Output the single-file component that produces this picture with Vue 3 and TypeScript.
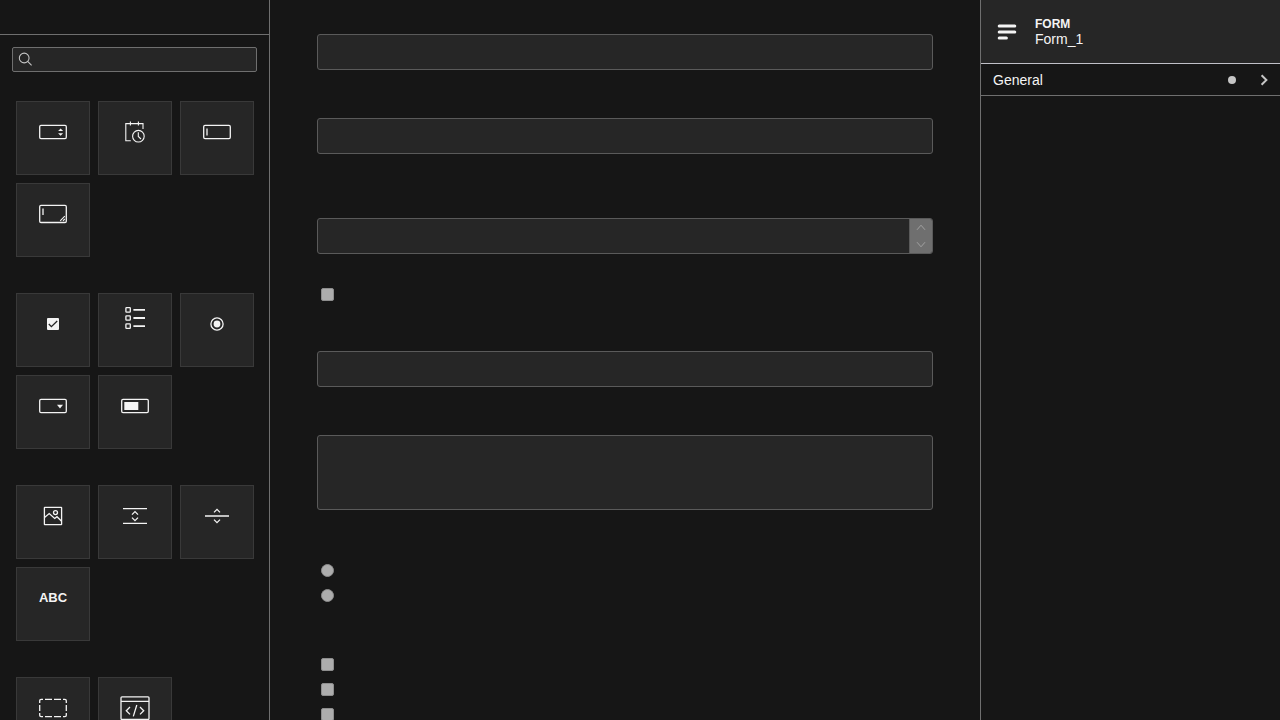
<script setup lang="ts">
import { ref } from 'vue'

interface Tile {
  name: string
  label: string
}

const groups: Tile[][] = [
  [
    { name: 'number', label: 'Number' },
    { name: 'datetime', label: 'Date time' },
    { name: 'textfield', label: 'Text field' },
    { name: 'textarea', label: 'Text area' },
  ],
  [
    { name: 'checkbox', label: 'Checkbox' },
    { name: 'checklist', label: 'Checkbox group' },
    { name: 'radio', label: 'Radio group' },
    { name: 'select', label: 'Select' },
    { name: 'taglist', label: 'Tag list' },
  ],
  [
    { name: 'image', label: 'Image view' },
    { name: 'spacer', label: 'Spacer' },
    { name: 'separator', label: 'Separator' },
    { name: 'text', label: 'Text view' },
  ],
  [
    { name: 'group', label: 'Group' },
    { name: 'iframe', label: 'iFrame' },
  ],
]

const search = ref('')
</script>

<template>
  <div class="editor">
    <aside class="palette">
      <header class="palette-header"></header>
      <div class="search">
        <svg class="search-icon" viewBox="0 0 16 16" aria-hidden="true">
          <circle cx="6.6" cy="6.4" r="5.2" />
          <path d="M10.3 10.1L14.5 14.3" />
        </svg>
        <input v-model="search" type="text" aria-label="Search components" />
      </div>
      <div class="groups">
        <div v-for="(group, i) in groups" :key="i" class="tiles">
          <button v-for="tile in group" :key="tile.name" type="button" class="tile" :aria-label="tile.label">
            <svg class="icon" viewBox="0 0 54 54" aria-hidden="true">
              <template v-if="tile.name === 'number'">
                <rect x="13.7" y="20.4" width="26.6" height="13.2" rx="1.3" />
                <path class="solid" d="M32.1 26L34.6 23.5L37.1 26ZM32.1 28.3L34.6 30.8L37.1 28.3Z" />
              </template>
              <template v-else-if="tile.name === 'datetime'">
                <path class="thin" d="M35 24V18.6H17.8V35.7H22.8M22.4 16.5V20.6M30.4 16.5V20.6" />
                <circle class="thin" cx="30.4" cy="31.2" r="5.8" />
                <path class="thin" d="M30.3 27.3V31.4L33 34" />
              </template>
              <template v-else-if="tile.name === 'textfield'">
                <rect x="13.7" y="20.4" width="26.6" height="13.2" rx="1.3" />
                <path d="M17 23.5V30.5" />
              </template>
              <template v-else-if="tile.name === 'textarea'">
                <rect x="13.7" y="18.4" width="26.6" height="17.1" rx="1.3" />
                <path d="M17 21.5V28" />
                <path class="thin" d="M34.2 33.8L38.8 29.2M37 33.8L38.8 32" />
              </template>
              <template v-else-if="tile.name === 'checkbox'">
                <rect class="solid" x="21" y="21" width="12" height="12" rx="1" />
                <path class="tick" d="M22.8 27L25.4 29.7L31.2 24" />
              </template>
              <template v-else-if="tile.name === 'checklist'">
                <rect v-for="y in [10.7, 18.8, 26.9]" :key="y" x="17.9" :y="y" width="4.4" height="4.4" rx="0.6" />
                <path class="bold" d="M25.4 12.9H37M25.4 21H37M25.4 29.1H37" />
              </template>
              <template v-else-if="tile.name === 'radio'">
                <circle cx="27" cy="27" r="6.1" />
                <circle class="solid" cx="27" cy="27" r="3.4" />
              </template>
              <template v-else-if="tile.name === 'select'">
                <rect x="13.7" y="20.4" width="26.6" height="13.2" rx="1.3" />
                <path class="solid" d="M31 25.7H37L34 29.5Z" />
              </template>
              <template v-else-if="tile.name === 'taglist'">
                <rect x="13.7" y="20.4" width="26.6" height="13.2" rx="1.3" />
                <rect class="solid" x="16.3" y="23" width="14" height="8" />
              </template>
              <template v-else-if="tile.name === 'image'">
                <rect x="18.4" y="18.4" width="17.2" height="17.2" rx="0.4" />
                <circle cx="29.5" cy="23.6" r="2" />
                <path d="M18.5 28.4L23.2 24.5L28.7 29.5L31 27.7L35.6 32.2" />
              </template>
              <template v-else-if="tile.name === 'spacer'">
                <path d="M15 19.6H39M15 34.4H39M24 25.6L27 22.6L30 25.6M24 28.6L27 31.6L30 28.6" />
              </template>
              <template v-else-if="tile.name === 'separator'">
                <path d="M15 27H39M24 23.4L27 20.4L30 23.4M24 30.6L27 33.6L30 30.6" />
              </template>
              <template v-else-if="tile.name === 'text'">
                <text x="27" y="31" text-anchor="middle">ABC</text>
              </template>
              <template v-else-if="tile.name === 'group'">
                <path
                  d="M13.7 22V19.7Q13.7 18.4 15.1 18.4H17M19 18.4H26M28 18.4H35M37 18.4H38.9Q40.3 18.4 40.3 19.7V22M40.3 24V30M40.3 32V34.3Q40.3 35.6 38.9 35.6H37M35 35.6H28M26 35.6H19M17 35.6H15.1Q13.7 35.6 13.7 34.3V32M13.7 30V24"
                />
              </template>
              <template v-else-if="tile.name === 'iframe'">
                <rect x="13" y="15.8" width="28" height="22.7" rx="1" />
                <path d="M13 20.4H41M22 26L18.3 29.7L22 33.4M32 26L35.7 29.7L32 33.4M28.8 24L25.3 35.4" />
              </template>
            </svg>
          </button>
        </div>
      </div>
    </aside>

    <main class="canvas">
      <form class="form" @submit.prevent>
        <input class="field" type="text" aria-label="Text field" readonly />
        <input class="field gap-large" type="text" aria-label="Second text field" readonly />
        <div class="field number gap-wide">
          <input type="text" inputmode="numeric" aria-label="Number" readonly />
          <div class="stepper">
            <button type="button" aria-label="Increase">
              <svg viewBox="0 0 10 7" aria-hidden="true"><path d="M1 5.8L5 1.2L9 5.8" /></svg>
            </button>
            <button type="button" aria-label="Decrease">
              <svg viewBox="0 0 10 7" aria-hidden="true"><path d="M1 1.2L5 5.8L9 1.2" /></svg>
            </button>
          </div>
        </div>
        <div class="options gap-check">
          <input type="checkbox" aria-label="Checkbox" disabled />
        </div>
        <input class="field gap-after-check" type="text" aria-label="Date" readonly />
        <textarea class="field area gap-large" aria-label="Text area" readonly></textarea>
        <div class="options gap-radio">
          <input type="radio" name="choice" aria-label="First choice" disabled />
          <input type="radio" name="choice" aria-label="Second choice" disabled />
        </div>
        <div class="options gap-list">
          <input v-for="n in 3" :key="n" type="checkbox" :aria-label="`Option ${n}`" disabled />
        </div>
      </form>
    </main>

    <aside class="properties">
      <header class="properties-header">
        <svg class="form-icon" viewBox="0 0 36 36" aria-hidden="true">
          <path d="M10.2 11.9H25.8M10.2 18H25.8M10.2 24.1H17.4" />
        </svg>
        <div>
          <div class="type">FORM</div>
          <div class="name">Form_1</div>
        </div>
      </header>
      <button type="button" class="section" aria-expanded="false">
        <span class="section-title">General</span>
        <span class="dot"></span>
        <svg class="arrow" viewBox="0 0 16 16" aria-hidden="true"><path d="M5.6 3.2L10.4 8L5.6 12.8" /></svg>
      </button>
    </aside>
  </div>
</template>

<style>
body {
  background: #161616;
}
</style>

<style scoped>
.editor {
  display: grid;
  grid-template-columns: 270px minmax(0, 1fr) 300px;
  height: 100vh;
  overflow: hidden;
  background: #161616;
  color: #f4f4f4;
  font-family: "Liberation Sans", Arial, sans-serif;
  font-size: 14px;
}

.editor * {
  box-sizing: border-box;
}

button,
input,
textarea {
  margin: 0;
  padding: 0;
  color: inherit;
  font: inherit;
}

.palette {
  border-right: 1px solid #6f6f6f;
  overflow: hidden;
}

.palette-header {
  height: 35px;
  border-bottom: 1px solid #6f6f6f;
}

.search {
  display: flex;
  align-items: center;
  height: 25px;
  margin: 12px;
  padding-left: 5px;
  border: 1px solid #6f6f6f;
  border-radius: 2px;
  background: #262626;
}

.search-icon {
  flex: none;
  width: 15px;
  height: 15px;
  fill: none;
  stroke: #c6c6c6;
  stroke-width: 1.1;
}

.search input {
  flex: 1;
  min-width: 0;
  padding: 0 6px;
  border: 0;
  outline: 0;
  background: transparent;
}

.groups {
  display: flex;
  flex-direction: column;
  gap: 36px;
  padding: 17px 0 0 16px;
}

.tiles {
  display: flex;
  flex-wrap: wrap;
  gap: 8px;
}

.tile {
  display: flex;
  justify-content: center;
  width: 74px;
  height: 74px;
  padding-top: 3px;
  border: 1px solid #393939;
  background: #262626;
}

.icon {
  width: 54px;
  height: 54px;
  fill: none;
  stroke: #f4f4f4;
  stroke-width: 1.3;
}

.icon .thin {
  stroke-width: 1.1;
}

.icon .bold {
  stroke-width: 1.8;
}

.icon .solid {
  fill: #f4f4f4;
  stroke: none;
}

.icon .tick {
  stroke: #262626;
}

.icon text {
  fill: #f4f4f4;
  stroke: none;
  font-size: 13px;
  font-weight: 700;
}

.canvas {
  min-width: 0;
  padding: 34px 47px 0;
  overflow: hidden;
}

.form {
  display: flex;
  flex-direction: column;
}

.field {
  width: 100%;
  height: 36px;
  flex: none;
  border: 1px solid #5a5a5a;
  border-radius: 3px;
  outline: 0;
  background: #262626;
}

.area {
  height: 75px;
  resize: none;
}

.gap-large {
  margin-top: 48px;
}

.gap-wide {
  margin-top: 64px;
}

.gap-check {
  margin-top: 34px;
}

.gap-after-check {
  margin-top: 50px;
}

.gap-radio {
  margin-top: 54px;
}

.gap-list {
  margin-top: 56px;
}

.number {
  display: flex;
  overflow: hidden;
}

.number input {
  flex: 1;
  min-width: 0;
  border: 0;
  outline: 0;
  background: transparent;
}

.stepper {
  display: flex;
  flex-direction: column;
  width: 23px;
  border-left: 1px solid #5a5a5a;
  background: #6f6f6f;
}

.stepper button {
  display: flex;
  flex: 1;
  align-items: center;
  justify-content: center;
  border: 0;
  background: transparent;
}

.stepper svg {
  width: 10px;
  height: 7px;
  fill: none;
  stroke: #a0a0a0;
  stroke-width: 1;
}

.options {
  display: flex;
  flex-direction: column;
  gap: 12px;
  padding-left: 4px;
}

.options input {
  appearance: none;
  width: 13px;
  height: 13px;
  border: 1px solid #8d8d8d;
  border-radius: 2px;
  background: #adadad;
}

.options input[type="radio"] {
  border-radius: 50%;
}

.properties {
  border-left: 1px solid #6f6f6f;
}

.properties-header {
  display: flex;
  align-items: center;
  gap: 10px;
  height: 64px;
  padding-left: 8px;
  border-bottom: 1px solid #c0c0c8;
  background: #262626;
}

.form-icon {
  width: 36px;
  height: 36px;
  fill: none;
  stroke: #f4f4f4;
  stroke-width: 3;
  stroke-linecap: round;
}

.type {
  font-size: 12px;
  font-weight: 700;
  line-height: 16px;
}

.name {
  line-height: 15px;
}

.section {
  display: flex;
  align-items: center;
  width: 100%;
  height: 32px;
  padding: 0 8px 0 12px;
  border: 0;
  border-bottom: 1px solid #6f6f6f;
  background: transparent;
  text-align: left;
}

.section-title {
  flex: 1;
}

.dot {
  width: 8px;
  height: 8px;
  margin-right: 20px;
  border-radius: 50%;
  background: #c6c6c6;
}

.arrow {
  width: 16px;
  height: 16px;
  fill: none;
  stroke: #c6c6c6;
  stroke-width: 2;
}
</style>
